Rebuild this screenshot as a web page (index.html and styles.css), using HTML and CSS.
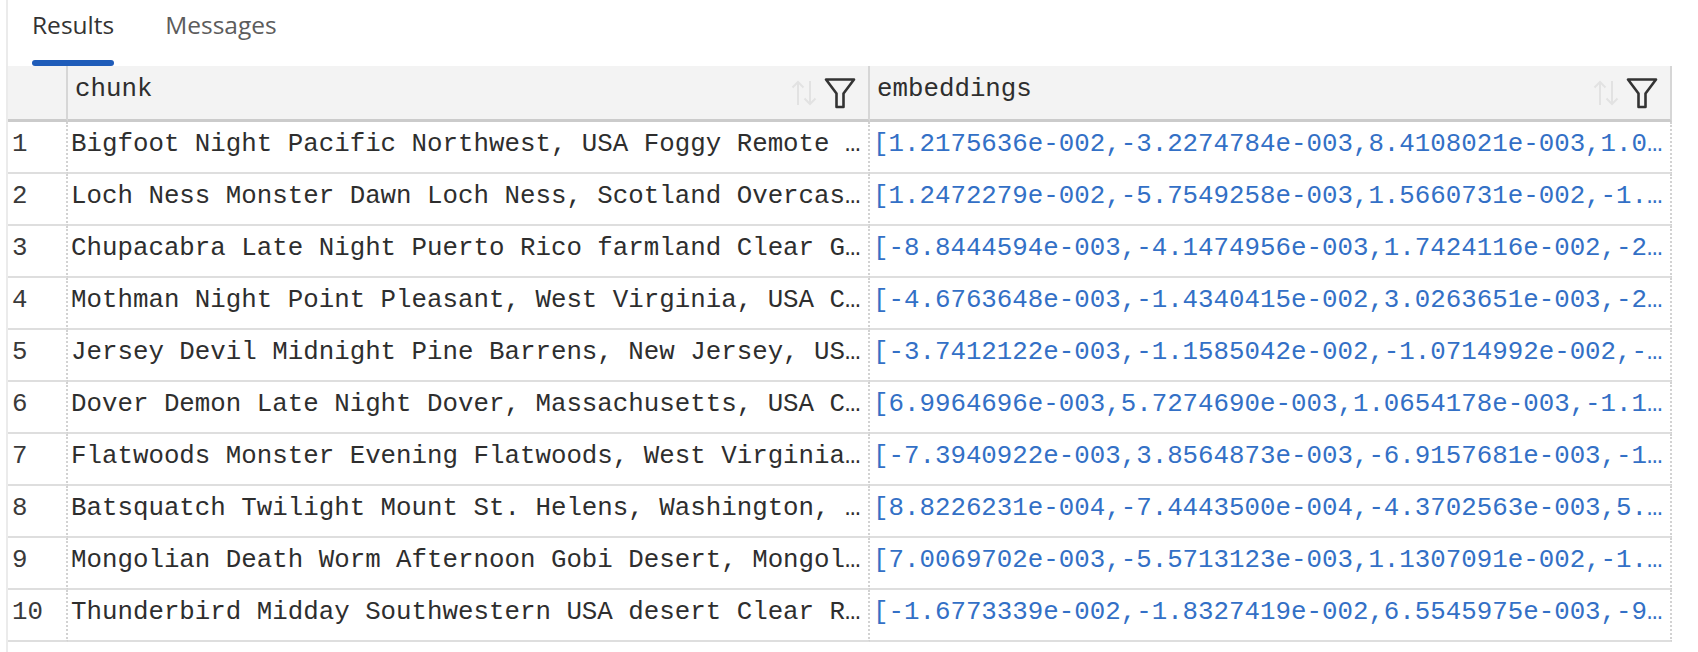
FILE: index.html
```html
<!DOCTYPE html>
<html>
<head>
<meta charset="utf-8">
<link rel="stylesheet" href="styles.css">
</head>
<body>
<div class="panel">
  <div class="tabs">
    <div class="tab active">Results</div>
    <div class="tab">Messages</div>
  </div>
  <div class="grid">
    <div class="hcell hnum"></div>
    <div class="hcell">
      <span class="hlabel">chunk</span>
      <svg class="sort" viewBox="0 0 28 28" width="28" height="28"><path d="M8 26V3M2.5 8.5L8 3l5.5 5.5M20 2v23M14.5 19.5L20 25l5.5-5.5" fill="none" stroke="#e2e2e2" stroke-width="2"/></svg>
      <svg class="filter" viewBox="0 0 32 32" width="32" height="32"><path d="M2 2.5h28L19.5 16.5V30h-7V16.5Z" fill="none" stroke="#333" stroke-width="2.6" stroke-linejoin="round"/></svg>
    </div>
    <div class="hcell">
      <span class="hlabel">embeddings</span>
      <svg class="sort" viewBox="0 0 28 28" width="28" height="28"><path d="M8 26V3M2.5 8.5L8 3l5.5 5.5M20 2v23M14.5 19.5L20 25l5.5-5.5" fill="none" stroke="#e2e2e2" stroke-width="2"/></svg>
      <svg class="filter" viewBox="0 0 32 32" width="32" height="32"><path d="M2 2.5h28L19.5 16.5V30h-7V16.5Z" fill="none" stroke="#333" stroke-width="2.6" stroke-linejoin="round"/></svg>
    </div>

    <div class="cell num">1</div>
    <div class="cell">Bigfoot Night Pacific Northwest, USA Foggy Remote …</div>
    <div class="cell emb">[1.2175636e-002,-3.2274784e-003,8.4108021e-003,1.0…</div>

    <div class="cell num">2</div>
    <div class="cell">Loch Ness Monster Dawn Loch Ness, Scotland Overcas…</div>
    <div class="cell emb">[1.2472279e-002,-5.7549258e-003,1.5660731e-002,-1.…</div>

    <div class="cell num">3</div>
    <div class="cell">Chupacabra Late Night Puerto Rico farmland Clear G…</div>
    <div class="cell emb">[-8.8444594e-003,-4.1474956e-003,1.7424116e-002,-2…</div>

    <div class="cell num">4</div>
    <div class="cell">Mothman Night Point Pleasant, West Virginia, USA C…</div>
    <div class="cell emb">[-4.6763648e-003,-1.4340415e-002,3.0263651e-003,-2…</div>

    <div class="cell num">5</div>
    <div class="cell">Jersey Devil Midnight Pine Barrens, New Jersey, US…</div>
    <div class="cell emb">[-3.7412122e-003,-1.1585042e-002,-1.0714992e-002,-…</div>

    <div class="cell num">6</div>
    <div class="cell">Dover Demon Late Night Dover, Massachusetts, USA C…</div>
    <div class="cell emb">[6.9964696e-003,5.7274690e-003,1.0654178e-003,-1.1…</div>

    <div class="cell num">7</div>
    <div class="cell">Flatwoods Monster Evening Flatwoods, West Virginia…</div>
    <div class="cell emb">[-7.3940922e-003,3.8564873e-003,-6.9157681e-003,-1…</div>

    <div class="cell num">8</div>
    <div class="cell">Batsquatch Twilight Mount St. Helens, Washington, …</div>
    <div class="cell emb">[8.8226231e-004,-7.4443500e-004,-4.3702563e-003,5.…</div>

    <div class="cell num">9</div>
    <div class="cell">Mongolian Death Worm Afternoon Gobi Desert, Mongol…</div>
    <div class="cell emb">[7.0069702e-003,-5.5713123e-003,1.1307091e-002,-1.…</div>

    <div class="cell num">10</div>
    <div class="cell">Thunderbird Midday Southwestern USA desert Clear R…</div>
    <div class="cell emb">[-1.6773339e-002,-1.8327419e-002,6.5545975e-003,-9…</div>
  </div>
</div>
</body>
</html>
```

FILE: styles.css
```css
html, body {
  margin: 0;
  padding: 0;
}

body {
  width: 1698px;
  height: 652px;
  overflow: hidden;
  background: #ffffff;
}

.panel {
  margin-left: 6px;
  border-left: 2px solid #ebebeb;
  height: 652px;
  box-sizing: border-box;
}

.tabs {
  display: flex;
  gap: 51px;
  padding-left: 24px;
  height: 66px;
}

.tab {
  display: flex;
  flex-direction: column;
  padding-top: 8px;
  font-family: "Open Sans", "Noto Sans", sans-serif;
  font-size: 24.5px;
  line-height: 33px;
  color: #5c5c5c;
}

.tab::after {
  content: "";
  margin-top: auto;
  height: 6px;
  border-radius: 3px;
}

.tab.active {
  color: #333333;
}

.tab.active::after {
  background: #1f5cb9;
}

.grid {
  display: grid;
  grid-template-columns: 60px 802px 802px;
  font-family: "Liberation Mono", "DejaVu Sans Mono", monospace;
  font-size: 25.8px;
  color: #2e2e2e;
}

.hcell {
  height: 53px;
  background: #f3f3f3;
  border-right: 2px solid #d6d6d6;
  border-bottom: 3px solid #cbcbcb;
  display: flex;
  align-items: center;
  gap: 6px;
  padding: 0 12px 0 7px;
  line-height: 44px;
  white-space: nowrap;
}

.hlabel {
  flex: 1;
  padding-bottom: 6px;
}

.sort, .filter {
  flex: none;
  display: block;
}

.cell {
  height: 50px;
  line-height: 45px;
  padding-left: 3px;
  border-right: 2px dotted #d2d2d2;
  border-bottom: 2px solid #dedede;
  white-space: nowrap;
  overflow: hidden;
}

.cell.num {
  padding-left: 4px;
  color: #3a3a3a;
}

.cell.emb {
  color: #3370c6;
}
```
